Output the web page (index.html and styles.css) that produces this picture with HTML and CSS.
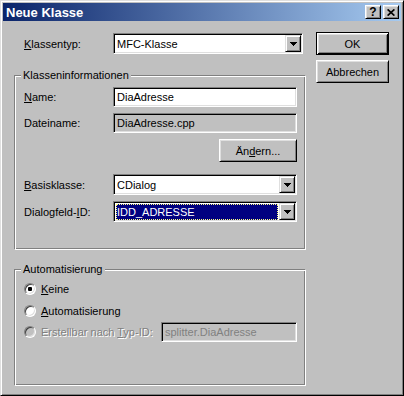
FILE: index.html
```html
<!DOCTYPE html>
<html lang="de">
  <head>
    <meta charset="UTF-8" />
    <title>Neue Klasse</title>
    <link rel="stylesheet" href="styles.css">
  </head>
  <body>
    <div class="window">
      <div class="titlebar">
        <span class="title">Neue Klasse</span>
        <div class="caption-btns">
          <span class="cbtn help">?</span>
          <span class="cbtn">
            <svg width="8" height="7" viewBox="0 0 8 7"><path d="M0.6 0.4l6.8 6.2M7.4 0.4l-6.8 6.2" stroke="#000" stroke-width="1.7" /></svg>
          </span>
        </div>
      </div>

      <div class="client">
        <div class="main">
          <div class="toprow">
            <span class="label top-label"><u>K</u>lassentyp:</span>
            <div class="combo wide">
              <span class="value">MFC-Klasse</span>
              <span class="arrow"><svg width="7" height="4" viewBox="0 0 7 4"><path d="M0 0h7v1h-1v1h-1v1h-1v1h-1v-1h-1v-1h-1v-1h-1z" /></svg></span>
            </div>
          </div>

          <div class="group info">
            <span class="group-title">Klasseninformationen</span>
            <div class="row">
              <span class="label"><u>N</u>ame:</span>
              <div class="field">DiaAdresse</div>
            </div>
            <div class="row r-file">
              <span class="label">Dateiname:</span>
              <div class="field readonly">DiaAdresse.cpp</div>
            </div>
            <div class="row r-btn">
              <button class="btn change">Än<u>d</u>ern...</button>
            </div>
            <div class="row r-base">
              <span class="label"><u>B</u>asisklasse:</span>
              <div class="combo">
                <span class="value">CDialog</span>
                <span class="arrow"><svg width="7" height="4" viewBox="0 0 7 4"><path d="M0 0h7v1h-1v1h-1v1h-1v1h-1v-1h-1v-1h-1v-1h-1z" /></svg></span>
              </div>
            </div>
            <div class="row r-dlg">
              <span class="label">Dialogfeld-<u>I</u>D:</span>
              <div class="combo">
                <span class="value sel">IDD_ADRESSE</span>
                <span class="arrow"><svg width="7" height="4" viewBox="0 0 7 4"><path d="M0 0h7v1h-1v1h-1v1h-1v1h-1v-1h-1v-1h-1v-1h-1z" /></svg></span>
              </div>
            </div>
          </div>

          <div class="group auto">
            <span class="group-title">Automatisierung</span>
            <div class="radio-row">
              <span class="radio checked"></span>
              <span class="radio-label"><u>K</u>eine</span>
            </div>
            <div class="radio-row r-auto">
              <span class="radio"></span>
              <span class="radio-label"><u>A</u>utomatisierung</span>
            </div>
            <div class="radio-row r-type">
              <span class="radio off"></span>
              <span class="radio-label disabled">Erstellbar nach <u>T</u>yp-ID:</span>
              <div class="field readonly type-field disabled-text">splitter.DiaAdresse</div>
            </div>
          </div>
        </div>

        <div class="side">
          <button class="btn default">OK</button>
          <button class="btn">Abbrechen</button>
        </div>
      </div>
    </div>
  </body>
</html>
```

FILE: styles.css
```css
* {
  box-sizing: border-box;
}

body {
  margin: 0;
  background: #c0c0c0;
  font: 11px "Liberation Sans", Arial, sans-serif;
  color: #000;
}

.window {
  width: 404px;
  height: 396px;
  padding: 2px;
  border: 1px solid;
  border-color: #dfdfdf #000 #000 #dfdfdf;
  box-shadow: inset 1px 1px #fff, inset -1px -1px #808080;
  background: #c0c0c0;
}

.titlebar {
  height: 18px;
  display: flex;
  align-items: center;
  justify-content: space-between;
  padding: 0 2px 0 3px;
  background: linear-gradient(90deg, #0a246a, #a6caf0);
  color: #fff;
  font-weight: bold;
}

.title {
  font-size: 13px;
}

.caption-btns {
  display: flex;
  gap: 2px;
}

.cbtn {
  width: 16px;
  height: 14px;
  display: flex;
  align-items: center;
  justify-content: center;
  background: #c0c0c0;
  border: 1px solid;
  border-color: #fff #000 #000 #fff;
  box-shadow: inset 1px 1px #dfdfdf, inset -1px -1px #808080;
  color: #000;
}

.cbtn.help {
  font-size: 12px;
  line-height: 12px;
}

.client {
  display: flex;
  gap: 10px;
  padding: 11px 0 0 11px;
}

.main {
  width: 292px;
}

.toprow {
  display: flex;
  align-items: center;
  height: 21px;
  margin-top: 1px;
  padding-left: 10px;
}

.top-label {
  width: 88px;
}

.label {
  width: 89px;
  flex: none;
}

/* sunken fields */
.field,
.combo {
  border: 1px solid;
  border-color: #808080 #fff #fff #808080;
  box-shadow: inset 1px 1px #000, inset -1px -1px #dfdfdf;
  background: #fff;
}

.field {
  width: 184px;
  height: 20px;
  display: flex;
  align-items: center;
  padding: 0 3px;
}

.field.readonly {
  background: #c0c0c0;
}

.combo {
  width: 184px;
  height: 21px;
  display: flex;
  align-items: center;
  padding: 1px;
}

.combo.wide {
  width: 190px;
}

.combo .value {
  flex: 1;
  height: 100%;
  display: flex;
  align-items: center;
  padding-left: 2px;
}

.combo .value.sel {
  margin: 1px 1px 0 1px;
  height: 16px;
  padding-left: 1px;
  background: #000080;
  color: #fff;
  outline: 1px dotted #ffff80;
  outline-offset: -1px;
}

.arrow {
  width: 16px;
  height: 17px;
  display: flex;
  align-items: center;
  justify-content: center;
  background: #c0c0c0;
  border: 1px solid;
  border-color: #dfdfdf #000 #000 #dfdfdf;
  box-shadow: inset 1px 1px #fff, inset -1px -1px #808080;
}

.arrow svg {
  fill: #000;
  margin-top: 1px;
}

/* etched group boxes */
.group {
  position: relative;
  border: 1px solid;
  border-color: #808080 #fff #fff #808080;
  box-shadow: inset 1px 1px #fff, inset -1px -1px #808080;
  padding: 0 8px 0 9px;
}

.group-title {
  position: absolute;
  top: -7px;
  left: 6px;
  padding: 0 2px;
  line-height: 13px;
  background: #c0c0c0;
}

.info {
  margin-top: 21px;
  height: 175px;
  padding-top: 11px;
}

.auto {
  margin-top: 19px;
  height: 117px;
  padding-top: 12px;
}

.row {
  display: flex;
  align-items: center;
}

.r-file,
.r-btn,
.r-dlg {
  margin-top: 6px;
}

.r-btn {
  justify-content: flex-end;
}

.r-base {
  margin-top: 12px;
}

/* push buttons */
.btn {
  font: inherit;
  color: #000;
  padding: 0;
  height: 23px;
  background: #c0c0c0;
  border: 1px solid;
  border-color: #fff #000 #000 #fff;
  box-shadow: inset 1px 1px #dfdfdf, inset -1px -1px #808080;
}

.btn.change {
  width: 78px;
}

.btn.default {
  border-color: #000;
  box-shadow: inset 1px 1px #fff, inset -1px -1px #000, inset 2px 2px #dfdfdf, inset -2px -2px #808080;
}

.side {
  display: flex;
  flex-direction: column;
  gap: 5px;
  width: 73px;
}

/* radios */
.radio-row {
  display: flex;
  align-items: center;
  height: 13px;
}

.r-auto {
  margin-top: 9px;
}

.r-type {
  margin-top: 5px;
  height: 20px;
}

.radio {
  position: relative;
  width: 12px;
  height: 12px;
  flex: none;
  border-radius: 50%;
  border: 1px solid;
  border-color: #808080 #fff #fff #808080;
  box-shadow: inset 1px 1px #404040, inset -1px -1px #dfdfdf;
  background: #fff;
}

.radio.checked::after {
  content: "";
  position: absolute;
  left: 3px;
  top: 3px;
  width: 4px;
  height: 4px;
  border-radius: 1px;
  background: #000;
}

.radio.off {
  background: #c0c0c0;
}

.radio-label {
  margin-left: 5px;
}

.disabled {
  color: #808080;
  text-shadow: 1px 1px #fff;
}

.type-field {
  width: 136px;
  margin-left: auto;
}

.disabled-text {
  color: #808080;
}
```
